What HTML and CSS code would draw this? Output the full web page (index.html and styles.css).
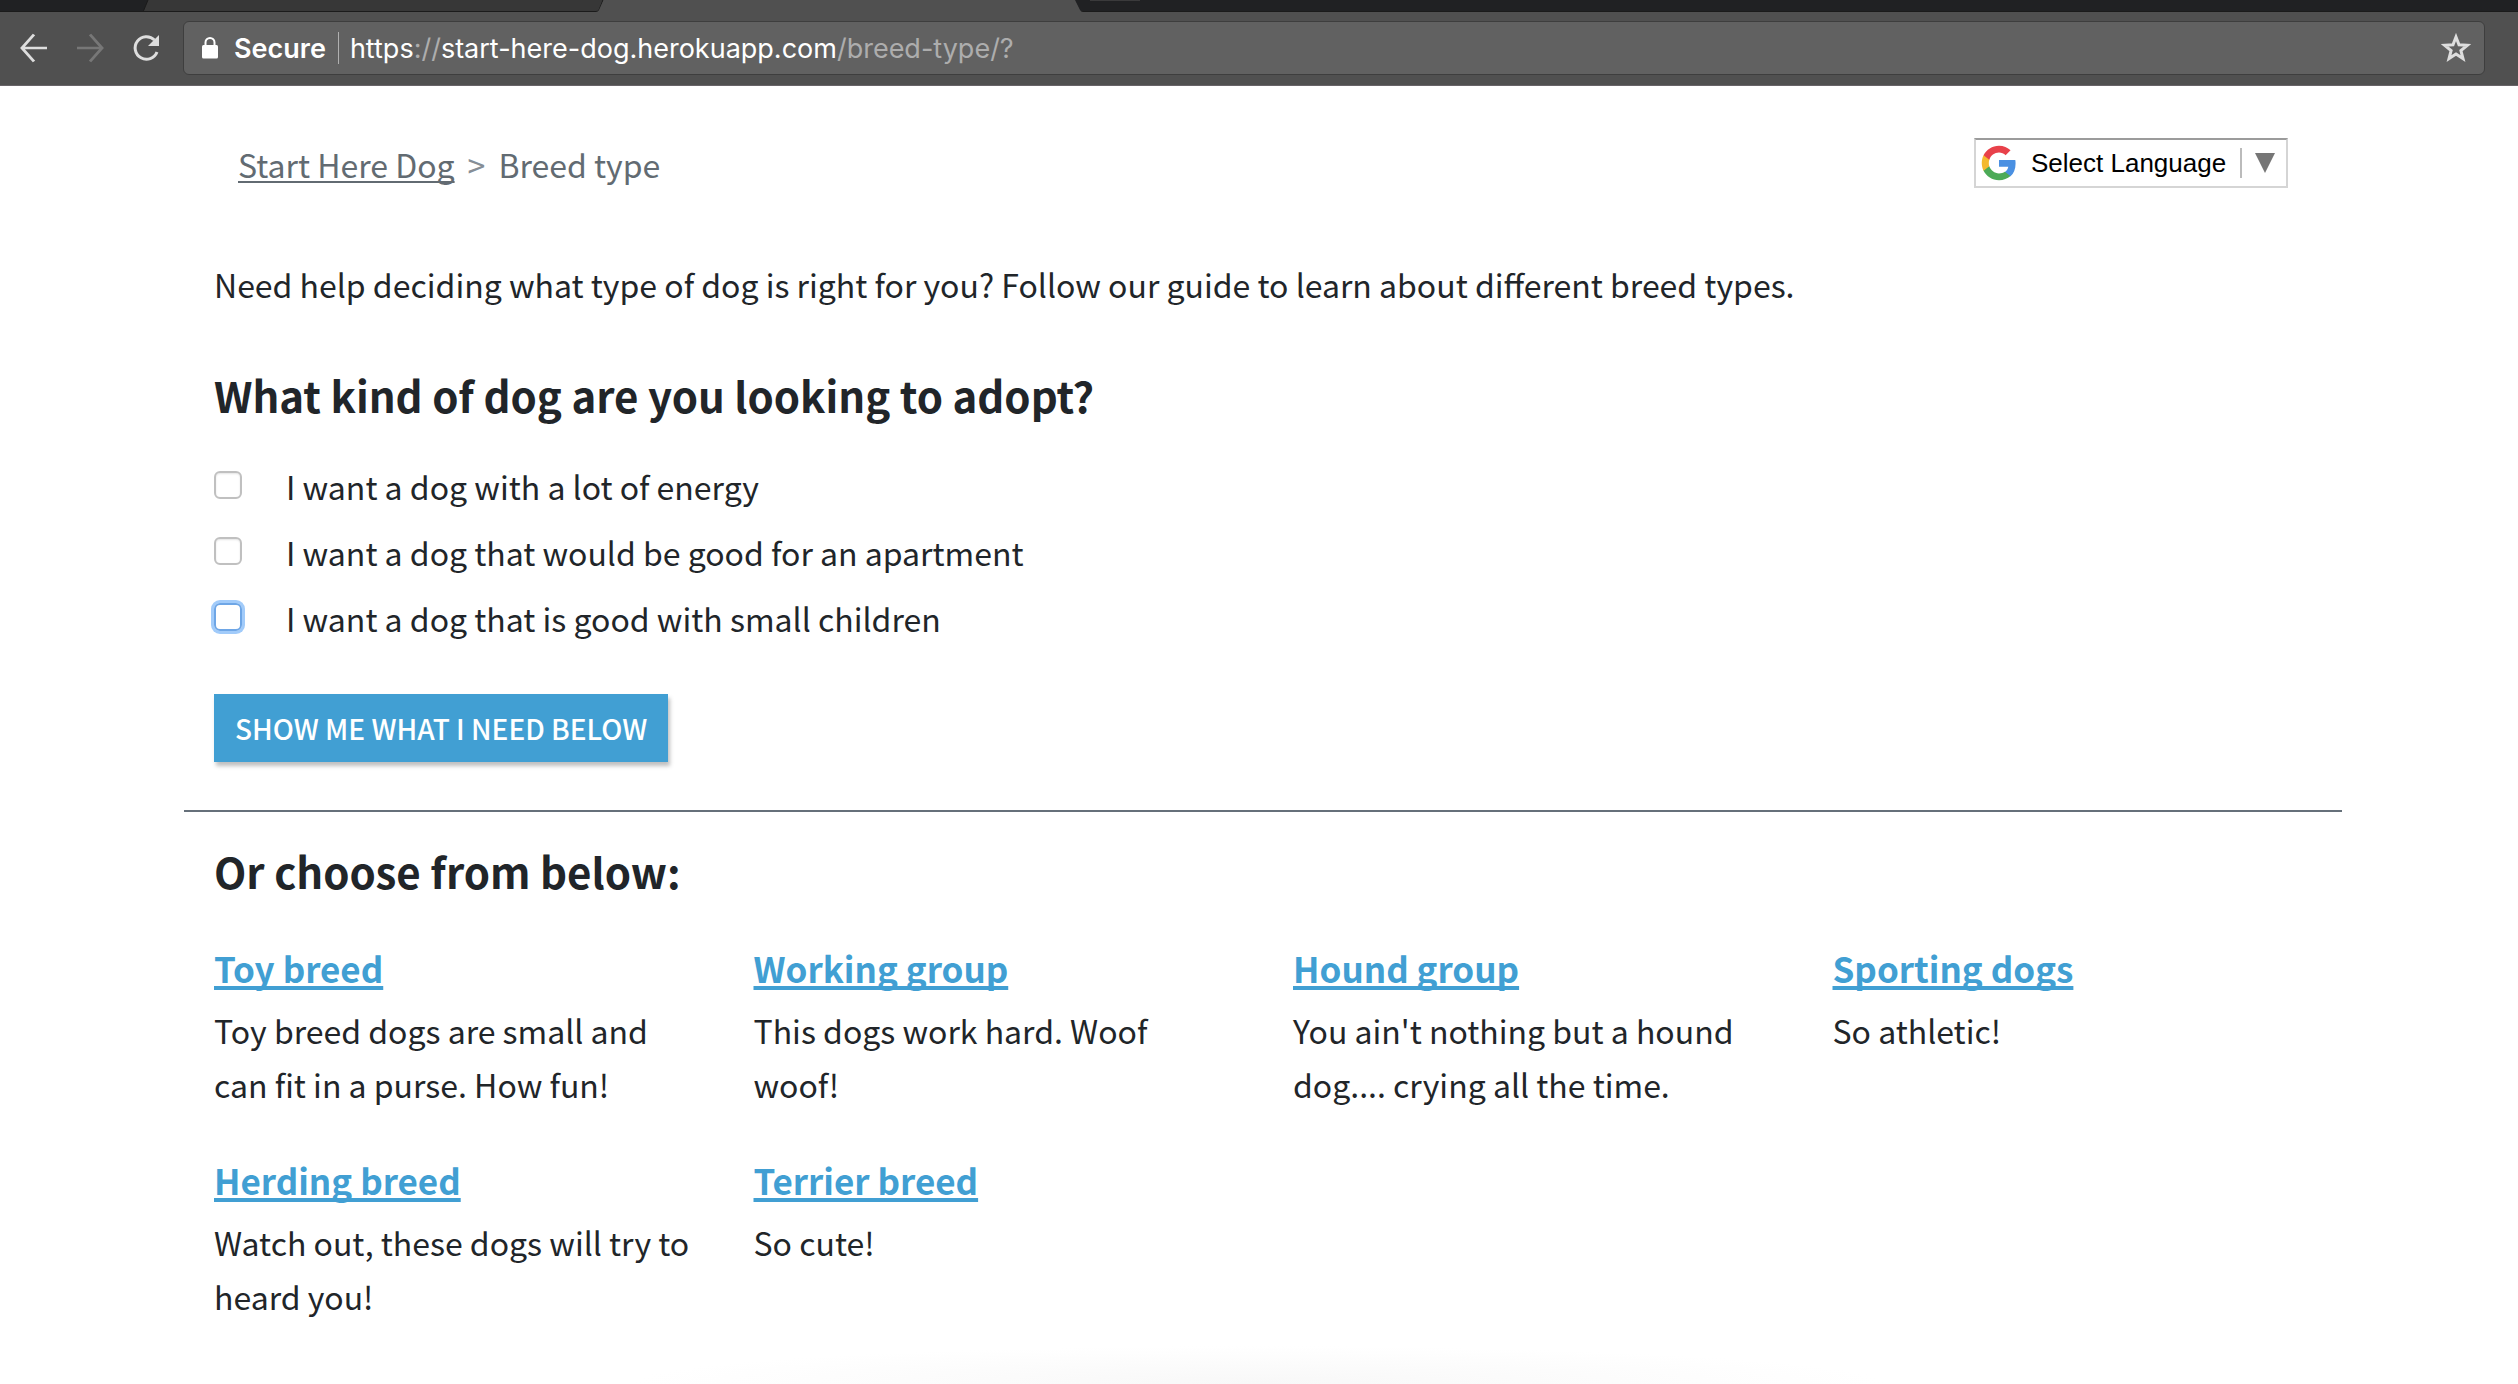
FILE: index.html
```html
<!DOCTYPE html>
<html lang="en">
<head>
<meta charset="utf-8">
<title>Breed type</title>
<link rel="stylesheet" href="styles.css">
</head>
<body>
<header class="browser">
  <div class="tabs">
    <svg class="tab-edges" width="1160" height="12" viewBox="0 0 1160 12" aria-hidden="true">
      <path d="M148 0H604L599 10Q598 12 596 12H143Z" fill="#373737"/>
      <path d="M148 0L143 12M603 0L599 10Q598 11.500 596 11.500H0" fill="none" stroke="#1b1b1b"/>
      <path d="M603.500 0H1075L1080 10Q1081 12 1083 12H596Q598 12 599 10Z" fill="#505050"/>
      <path d="M1090 0H1140V1H1090Z" fill="#3a3a3b"/>
    </svg>
  </div>
  <div class="toolbar">
    <button class="tool" aria-label="Back"><svg width="28" height="36" viewBox="0 0 28 36"><path d="M27 18H3M14 3L2 18L14 33" transform="translate(0 1.800) scale(1 .9)"/></svg></button>
    <button class="tool tool-off" aria-label="Forward"><svg width="28" height="36" viewBox="0 0 28 36"><path d="M1 18H25M14 3L26 18L14 33" transform="translate(0 1.800) scale(1 .9)"/></svg></button>
    <button class="tool" aria-label="Reload"><svg width="28" height="36" viewBox="0 0 28 36"><path d="M22.500 10A11.300 11.300 0 1 0 25 22"/><path class="solid" d="M27 5V16H16Z"/></svg></button>
    <div class="address">
      <svg class="lock" width="18" height="22" viewBox="0 0 18 22" aria-hidden="true"><path d="M4.500 9V5.500A4.500 4.500 0 0 1 13.500 5.500V9" fill="none" stroke="#fff" stroke-width="2"/><rect x="1" y="8" width="16" height="13.500" rx="1.500" fill="#fff"/></svg>
      <span class="secure">Secure</span>
      <span class="url">https<span class="dim">://</span>start-here-dog.herokuapp.com<span class="dim">/breed-type/?</span></span>
      <button class="tool star" aria-label="Bookmark this page"><svg width="30" height="30" viewBox="0 0 30 30"><path d="M15 4L18 11.800L26.300 12.300L19.900 17.600L22 25.600L15 21.100L8 25.600L10.100 17.600L3.700 12.300L12 11.800Z"/></svg></button>
    </div>
  </div>
</header>
<main class="page">
  <div class="top">
    <nav class="crumbs" aria-label="Breadcrumb"><a href="#">Start Here Dog</a><span class="sep">&gt;</span><span>Breed type</span></nav>
    <label class="language">
      <svg width="36" height="36" viewBox="0 0 48 48" aria-hidden="true">
        <path fill="#4A90E2" d="M46.100 24.500c0-1.600-.1-3.100-.4-4.500H24v9h12.400c-.5 2.900-2.100 5.300-4.600 6.900v5.800h7.500c4.300-4 6.800-9.900 6.800-17.200z"/>
        <path fill="#4CAA57" d="M24 47c6.200 0 11.400-2.100 15.200-5.600l-7.400-5.700c-2.100 1.400-4.700 2.200-7.800 2.200-6 0-11.100-4-12.900-9.500H3.400v5.900C7.200 41.800 15 47 24 47z"/>
        <path fill="#F4B92E" d="M11.100 28.400c-.5-1.400-.7-2.900-.7-4.400s.3-3 .7-4.400v-5.900H3.400C1.900 16.800 1 20.300 1 24s.9 7.200 2.400 10.300z"/>
        <path fill="#E8414A" d="M24 10.100c3.400 0 6.400 1.200 8.800 3.500l6.600-6.600C35.400 3.300 30.200 1 24 1 15 1 7.200 6.200 3.400 13.700l7.700 5.900C12.900 14.200 18 10.100 24 10.100z"/>
      </svg>
      <select class="language-list" aria-label="Select Language"><option>Select Language</option></select>
      <span class="arrow" aria-hidden="true"><svg width="20" height="20" viewBox="0 0 20 20"><path d="M0 0H20L10 20Z" fill="#767676"/></svg></span>
    </label>
  </div>
  <p class="intro">Need help deciding what type of dog is right for you? Follow our guide to learn about different breed types.</p>
  <form class="finder">
    <h2>What kind of dog are you looking to adopt?</h2>
    <label class="choice"><input type="checkbox">I want a dog with a lot of energy</label>
    <label class="choice"><input type="checkbox">I want a dog that would be good for an apartment</label>
    <label class="choice"><input type="checkbox" class="focused">I want a dog that is good with small children</label>
    <button class="submit" type="button">SHOW ME WHAT I NEED BELOW</button>
  </form>
  <hr>
  <section class="breeds">
    <h2>Or choose from below:</h2>
    <div class="grid">
      <article><h3><a href="#">Toy breed</a></h3><p>Toy breed dogs are small and can fit in a purse. How fun!</p></article>
      <article><h3><a href="#">Working group</a></h3><p>This dogs work hard. Woof woof!</p></article>
      <article><h3><a href="#">Hound group</a></h3><p>You ain't nothing but a hound dog.... crying all the time.</p></article>
      <article><h3><a href="#">Sporting dogs</a></h3><p>So athletic!</p></article>
      <article><h3><a href="#">Herding breed</a></h3><p>Watch out, these dogs will try to heard you!</p></article>
      <article><h3><a href="#">Terrier breed</a></h3><p>So cute!</p></article>
    </div>
  </section>
</main>
</body>
</html>
```
FILE: styles.css
```css
* { box-sizing: border-box; }
body {
  margin: 0;
  min-height: 100vh;
  color: #212529;
  background: #fff radial-gradient(closest-side, #f8f8f8, #fff) no-repeat center bottom -36px / 1250px 74px;
  font: 32px/54px "Noto Sans CJK SC", "Noto Sans", sans-serif;
}
h2, h3, p { margin: 0; }
button { font: inherit; border: 0; }

.browser { background: #505050; border-bottom: 1px solid #686468; }
.tabs { height: 12px; background: #202123; border-bottom: 1px solid #1b1b1b; }
.tab-edges { display: block; }
.toolbar {
  display: flex;
  align-items: center;
  gap: 28px;
  height: 73px;
  padding: 0 33px 2px 20px;
}
.tool {
  display: flex;
  padding: 0;
  background: none;
  color: #dedede;
}
.tool svg { fill: none; stroke: currentColor; stroke-width: 3; }
.tool .solid { fill: currentColor; stroke: none; }
.tool-off { color: #777; }
.address {
  display: flex;
  flex: 1;
  align-items: center;
  height: 54px;
  margin-left: -5px;
  padding: 0 13px 0 17px;
  background: #616161;
  border: 1px solid #3e3e3e;
  border-radius: 6px;
  color: #fff;
  font: 27px/42px Inter, Roboto, sans-serif;
}
.secure {
  margin-left: 15px;
  padding: 3px 12px 0 0;
  font-weight: 600;
}
.url {
  flex: 1;
  padding: 3px 0 0 12px;
  background: linear-gradient(#b0b0b0, #b0b0b0) no-repeat left center / 1px 32px;
}
.dim { color: #adadad; }

.page { padding: 51px 176px 40px 184px; }
.top {
  display: flex;
  justify-content: space-between;
  align-items: flex-start;
  padding: 0 54px;
}
.crumbs { color: #626b72; }
.crumbs a { color: inherit; text-decoration-thickness: 2px; text-underline-offset: 3px; text-decoration-skip-ink: none; }
.sep { margin: 0 13px; color: #868e96; }
.language {
  display: flex;
  align-items: center;
  height: 50px;
  margin-top: 1px;
  padding-left: 5px;
  border: 2px solid #d5d5d5;
  border-top-color: #9b9b9b;
}
.language-list {
  width: 209px;
  height: 30px;
  margin-left: 14px;
  padding: 0;
  appearance: none;
  border: 0;
  background: none;
  color: #000;
  font: 26px/30px "Liberation Sans", Arial, sans-serif;
}
.arrow {
  display: flex;
  align-items: center;
  height: 30px;
  padding: 0 11px 0 13px;
  border-left: 2px solid #bbb;
}
.intro { padding: 66px 30px 55px; }
h2 { font-size: 42px; line-height: 58px; font-weight: 700; }
.finder {
  display: flex;
  flex-direction: column;
  align-items: flex-start;
  padding: 0 30px 48px;
}
.finder h2 { margin-bottom: 29px; }
.choice { display: flex; align-items: center; gap: 44px; line-height: 66px; }
.choice input {
  appearance: none;
  width: 28px;
  height: 28px;
  margin: 0 0 2px;
  border: 2px solid #c0c0c0;
  border-radius: 6px;
  box-shadow: inset 0 1px 2px #e4e4e4;
}
.choice .focused { border-color: #6ea6e6; box-shadow: 0 0 0 3px #a1cbfa; }
.submit {
  height: 68px;
  margin-top: 43px;
  padding: 0 21px;
  background: #419fd3;
  color: #fff;
  font-size: 28px;
  line-height: 68px;
  font-weight: 500;
  box-shadow: 2px 4px 4px rgba(0, 0, 0, .25);
}
hr { height: 2px; margin: 0; border: 0; background: #66707a; }
.breeds { padding-top: 30px; }
.breeds h2 { padding: 0 30px; margin-bottom: 41px; }
.grid { display: grid; grid-template-columns: repeat(4, 1fr); row-gap: 42px; }
.grid article { padding: 0 24px 0 30px; }
h3 { margin-bottom: 8px; font-size: 35px; line-height: 54px; font-weight: 700; }
h3 a { color: #419fd3; text-decoration-thickness: 4px; text-underline-offset: 3px; text-decoration-skip-ink: none; }
```
